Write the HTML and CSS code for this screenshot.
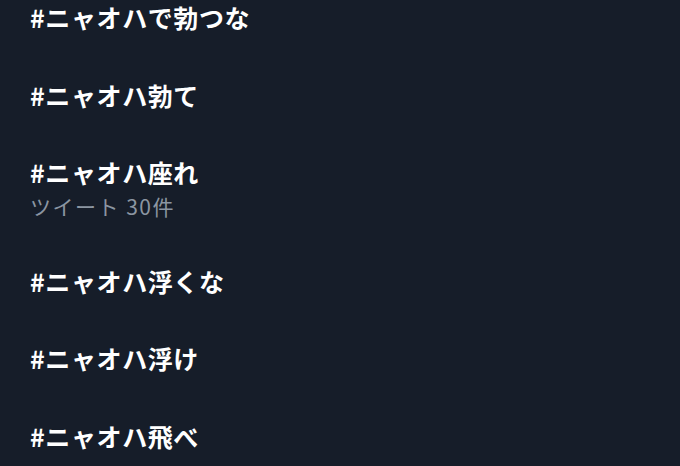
FILE: index.html
```html
<!DOCTYPE html>
<html lang="ja">
<head>
    <meta charset="UTF-8">
    <meta name="viewport" content="width=device-width, initial-scale=1.0">
    <title>トレンド</title>
    <link rel="stylesheet" href="styles.css">
</head>
<body>
    <!-- Trend list -->
    <div class="trends">
        <div class="trend">
            <div class="trend-name">#ニャオハで勃つな</div>
        </div>
        <div class="trend">
            <div class="trend-name">#ニャオハ勃て</div>
        </div>
        <div class="trend">
            <div class="trend-name">#ニャオハ座れ</div>
            <div class="trend-count">ツイート 30件</div>
        </div>
        <div class="trend">
            <div class="trend-name">#ニャオハ浮くな</div>
        </div>
        <div class="trend">
            <div class="trend-name">#ニャオハ浮け</div>
        </div>
        <div class="trend">
            <div class="trend-name">#ニャオハ飛べ</div>
        </div>
    </div>
</body>
</html>
```

FILE: styles.css
```css
body {
    margin: 0;
    padding: 0;
    background-color: #161d29;
    color: #ffffff;
    font-family: "Noto Sans CJK JP", "Noto Sans", sans-serif;
}
.trends {
    display: flex;
    flex-direction: column;
    gap: 47.5px;
    padding: 2px 30px 0;
}
.trend-name {
    font-size: 25px;
    font-weight: bold;
    line-height: 30px;
    letter-spacing: 0.6px;
}
.trend-count {
    margin-top: 7px;
    font-size: 21px;
    line-height: 24px;
    letter-spacing: 1.5px;
    color: #8b95a1;
}
```
